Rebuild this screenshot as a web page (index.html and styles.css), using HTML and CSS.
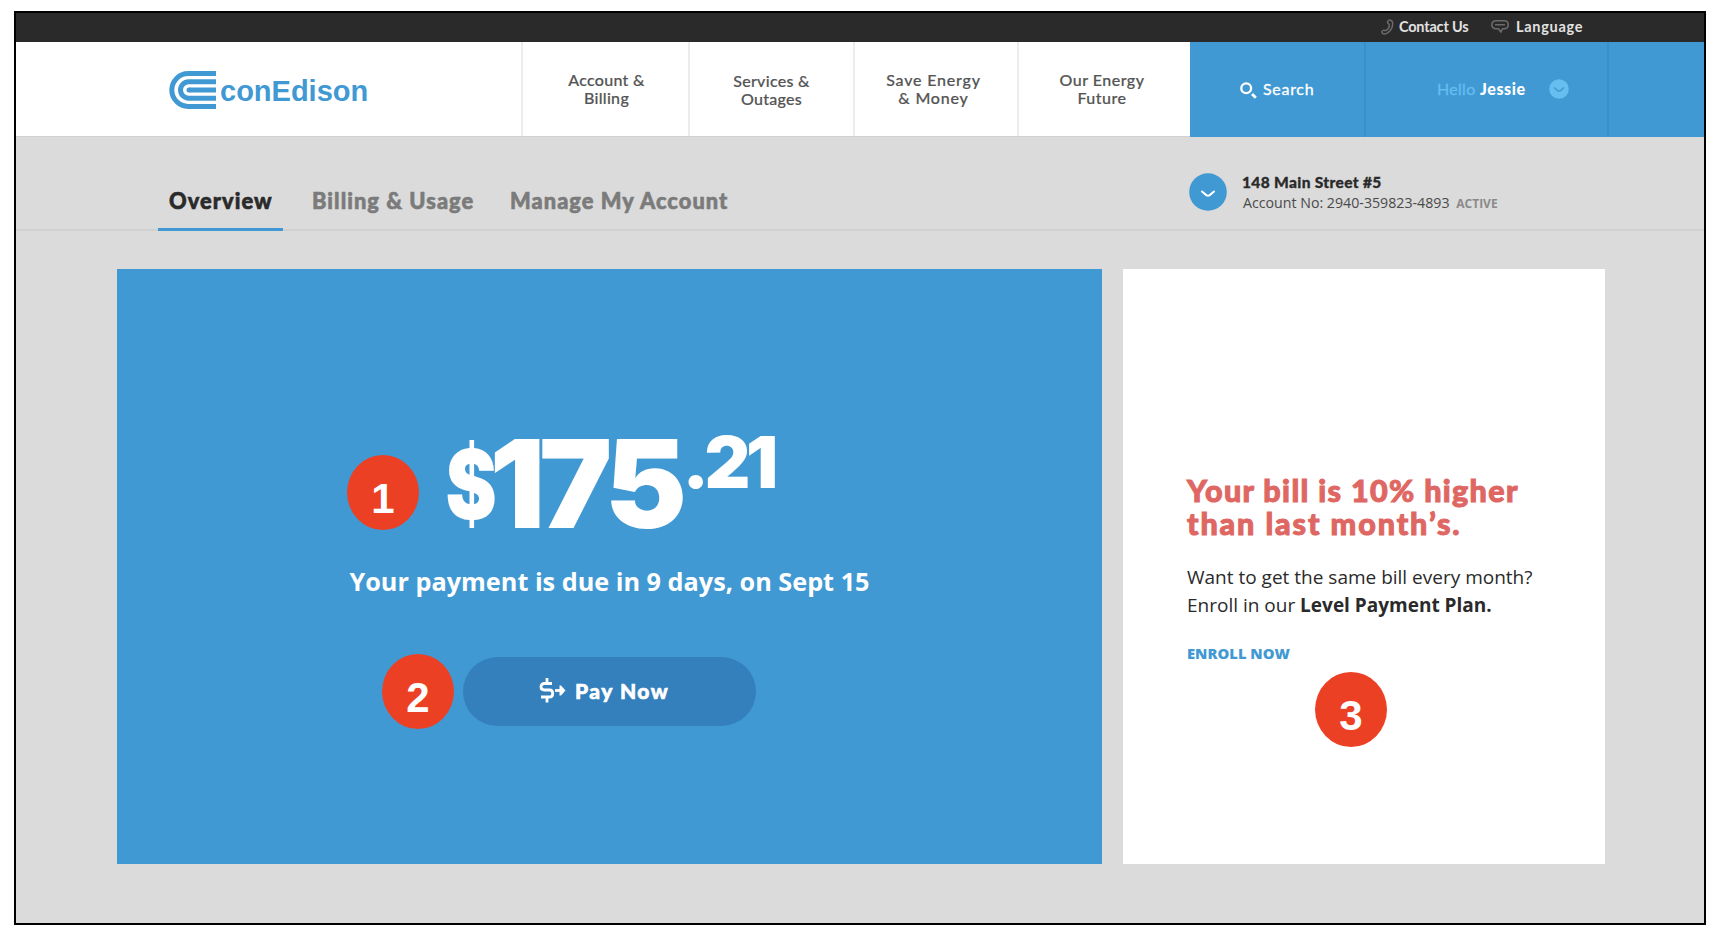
FILE: index.html
```
<!DOCTYPE html>
<html lang="en">
<head>
    <meta charset="UTF-8">
    <meta name="viewport" content="width=device-width, initial-scale=1.0">
    <title>conEdison - Account Overview</title>
    <link rel="stylesheet" href="styles.css">
</head>
<body>
<div class="frame">
    <div class="topbar">
        <a class="contact">
            <svg width="13" height="16" viewBox="0 0 13 16" fill="none" stroke="#6b6b6b" stroke-width="1.5">
                <path d="M7.2 1.8C8.6.6 10.8.9 11.4 3c.9 3.400-.9 8.200-4.400 10.700-2 1.400-4.500 1.500-5.700.4-.8-.9-.4-2.300.8-2.700 1.100-.4 1.900.6 3.100-.1 2.200-1.300 3.300-3.500 3.100-5.500C8.100 4.600 6.600 4.700 6.500 3.500c0-.7.2-1.300.7-1.700z"/>
            </svg>
            <span>Contact Us</span>
        </a>
        <a class="language">
            <svg width="18" height="13" viewBox="0 0 18 13" fill="none" stroke="#6b6b6b" stroke-width="1.600">
                <path d="M7.500 8.800H5C2.500 8.800.8 7.100.8 4.800S2.500.8 5 .8h8c2.500 0 4.200 1.700 4.200 4s-1.700 4-4.200 4h-1.500L9.800 12 7.500 8.800zM4 4.800h10"/>
            </svg>
            <span>Language</span>
        </a>
    </div>

    <div class="header">
        <div class="logo">
            <svg width="47" height="38" viewBox="0 0 47 38" fill="none" stroke="#4199d3" stroke-width="5">
                <path d="M47 2.600H19.200a16.400 16.400 0 0 0 0 32.800H47"/>
                <path d="M47 10.800H19.700a8.200 8.200 0 0 0 0 16.400H47"/>
                <path d="M47 19H20" />
                <circle cx="20" cy="19" r="2.500" fill="#4199d3" stroke="none"/>
            </svg>
            <span>conEdison</span>
        </div>
        <div class="nav nav-account">Account &amp;<br>Billing</div>
        <div class="nav nav-services">Services &amp;<br>Outages</div>
        <div class="nav nav-save">Save Energy<br>&amp; Money</div>
        <div class="nav nav-future">Our Energy<br>Future</div>
        <div class="search">
            <svg width="17" height="17" viewBox="0 0 17 17" fill="none" stroke="#fff">
                <circle cx="6.200" cy="6.200" r="4.900" stroke-width="2.300"/>
                <path d="M12 12l3.800 3.800" stroke-width="2.800"/>
            </svg>
            <span>Search</span>
        </div>
        <div class="user">
            <span class="hello">Hello</span>
            <span class="name">Jessie</span>
            <svg width="20" height="20" viewBox="0 0 20 20">
                <circle cx="10" cy="10" r="9.800" fill="#65bdf0"/>
                <path d="M5 8.500l3.300 2.800q1.700 1.300 3.400 0L15 8.500" fill="none" stroke="#4199d3" stroke-width="1.600"/>
            </svg>
        </div>
        <div class="header-end"></div>
    </div>

    <div class="subnav">
        <div class="tabs">
            <a class="tab active">Overview</a>
            <a class="tab usage">Billing &amp; Usage</a>
            <a class="tab manage">Manage My Account</a>
        </div>
        <div class="account">
            <svg width="38" height="38" viewBox="0 0 38 38">
                <circle cx="19" cy="19" r="18.800" fill="#4199d3"/>
                <path d="M13 18.500l4.300 3.600q1.700 1.200 3.400 0l4.300-3.600" fill="none" stroke="#fff" stroke-width="2" stroke-linecap="round"/>
            </svg>
            <div class="account-text">
                <div class="address">148 Main Street #5</div>
                <div class="number">Account No: 2940-359823-4893 <b>ACTIVE</b></div>
            </div>
        </div>
    </div>

    <div class="cards">
        <div class="card pay">
            <div class="amount">
                <span class="dollar">$</span>
                <span class="whole">175</span>
                <span class="cents">.21</span>
            </div>
            <div class="due">Your payment is due in 9 days, on Sept 15</div>
            <a class="pay-button">
                <svg width="27" height="25" viewBox="0 0 27 25" fill="none" stroke="#fff" stroke-width="2.800">
                    <path d="M13 5.500H5.200C3.200 5.500 2 6.800 2 8.800S3.200 12 5.200 12h5.300c2 0 3.200 1.400 3.200 3.400s-1.200 3.600-3.200 3.600H2M8 0v5.500M8 19v5.500"/>
                    <path d="M16 12.500h5"/>
                    <path d="M20.500 7.500l1.500 0 4.500 5-4.500 5h-1.500z" fill="#fff" stroke="none"/>
                </svg>
                <span>Pay Now</span>
            </a>
        </div>
        <div class="card bill">
            <h2><span class="line1">Your bill is 10% higher</span><br><span class="line2">than last month’s.</span></h2>
            <p>Want to get the same bill every month?<br>Enroll in our <b>Level Payment Plan.</b></p>
            <a class="enroll">ENROLL NOW</a>
        </div>
    </div>

    <!-- numbered callouts -->
    <div class="badge badge-1">1</div>
    <div class="badge badge-2">2</div>
    <div class="badge badge-3">3</div>
</div>
</body>
</html>
```
FILE: styles.css
```
* {
    box-sizing: border-box;
}
body {
    margin: 0;
    padding: 11px 0 0 14px;
    background: #fff;
    font-family: Lato, sans-serif;
    color: #2a2a2a;
    overflow: hidden;
}
svg {
    display: block;
    flex: none;
}
.frame {
    position: relative;
    width: 1692px;
    height: 914px;
    border: 2px solid #000;
    background: #dbdbdb;
}
.topbar {
    display: flex;
    justify-content: flex-end;
    height: 29px;
    padding-right: 121px;
    background: #2a2a2a;
    color: #e2e2e2;
    font-size: 14.5px;
    font-weight: bold;
    line-height: 28px;
}
.topbar a {
    display: flex;
}
.contact svg {
    margin: 6px 5px 0 0;
}
.contact span {
    width: 92px;
    letter-spacing: -0.2px;
}
.language svg {
    margin: 7px 7px 0 0;
}
.language span {
    width: 67px;
    letter-spacing: 0.7px;
    line-height: 27px;
}

.header {
    display: flex;
    height: 95px;
    border-bottom: 1px solid #d0d0d0;
    background: #fff;
}
.logo {
    display: flex;
    width: 505px;
    padding: 29px 0 0 153px;
    color: #4199d3;
    font: bold 29px/38px "Liberation Sans", Arial, sans-serif;
}
.logo span {
    margin-left: 4px;
    padding-top: 1px;
}
.nav {
    border-left: 2px solid #ececec;
    padding-top: 29px;
    text-align: center;
    font-size: 16px;
    font-weight: 500;
    line-height: 18.4px;
    letter-spacing: 0.3px;
    color: #555;
    -webkit-text-stroke: 0.2px;
}
.nav-account {
    width: 167px;
    padding-left: 2px;
}
.nav-services {
    width: 165px;
    padding-top: 30px;
}
.nav-save {
    width: 164px;
    padding-right: 5px;
    letter-spacing: 0.8px;
}
.nav-future {
    width: 173px;
    padding-right: 5px;
    letter-spacing: 0.5px;
}
.search, .user, .header-end {
    height: 95px;
    background: #4199d3;
    color: #fff;
    font-size: 16px;
    line-height: 94px;
}
.search {
    display: flex;
    width: 174px;
    padding-left: 50px;
    letter-spacing: 0.7px;
    -webkit-text-stroke: 0.3px;
}
.search svg {
    margin: 40px 6px 0 0;
}
.user {
    display: flex;
    width: 243px;
    padding-left: 71px;
    border-left: 2px solid #3b8ec9;
}
.hello {
    width: 43px;
    color: #65bdf0;
    letter-spacing: 0.3px;
    -webkit-text-stroke: 0.3px;
}
.name {
    width: 69px;
    font-weight: 900;
    letter-spacing: 0.6px;
}
.user svg {
    margin-top: 37px;
}
.header-end {
    flex: 1;
    border-left: 2px solid #3b8ec9;
}

.subnav {
    display: flex;
    height: 94px;
    border-bottom: 2px solid #d0d0d0;
}
.tabs {
    display: flex;
    width: 1173px;
    padding-left: 142px;
}
.tab {
    height: 94px;
    padding: 49px 0 0 11px;
    font-size: 21.8px;
    font-weight: 900;
    line-height: 30px;
    letter-spacing: 1.05px;
    color: #7b7b7b;
    white-space: nowrap;
    -webkit-text-stroke: 0.6px;
}
.tab.active {
    width: 125px;
    border-bottom: 3px solid #4199d3;
    color: #2a2a2a;
}
.tab.usage {
    width: 216px;
    padding-left: 29px;
}
.account {
    display: flex;
    padding-top: 36px;
}
.account-text {
    padding-left: 15px;
}
.address {
    margin-top: -1px;
    font-size: 15.5px;
    font-weight: 900;
    line-height: 20px;
    letter-spacing: 0.35px;
    -webkit-text-stroke: 0.3px;
}
.number {
    padding-left: 1px;
    font-family: "Open Sans", sans-serif;
    font-size: 14.2px;
    line-height: 21px;
    color: #4a4a4a;
}
.number b {
    margin-left: 3px;
    font-size: 12px;
    color: #8a8a8a;
}

.cards {
    display: flex;
    gap: 21px;
    padding: 38px 0 0 101px;
}
.card {
    height: 595px;
}
.pay {
    display: flex;
    flex-direction: column;
    align-items: center;
    width: 985px;
    padding-top: 149px;
    background: #4199d3;
    color: #fff;
}
.amount {
    display: flex;
    height: 124px;
    width: 328px;
    font-family: Inter, sans-serif;
    font-weight: 900;
    line-height: 1;
}
.dollar {
    width: 44px;
    padding-top: 15px;
    font-size: 77px;
    letter-spacing: -5px;
    transform: scaleY(1.25);
    transform-origin: top;
}
.whole {
    width: 196px;
    padding-top: 4px;
    font-size: 123px;
    letter-spacing: -6px;
}
.cents {
    padding-top: 9px;
    font-size: 71px;
    letter-spacing: -4.5px;
}
.due {
    margin-top: 24px;
    font: 700 25.25px/30px "Open Sans", sans-serif;
    white-space: nowrap;
}
.pay-button {
    display: flex;
    width: 293px;
    height: 69px;
    margin-top: 61px;
    padding: 21px 0 0 76px;
    border-radius: 35px;
    background: #3480bc;
    font-size: 21px;
    font-weight: 900;
    line-height: 26px;
    letter-spacing: 1.5px;
    -webkit-text-stroke: 0.6px;
}
.pay-button span {
    margin-left: 9px;
}
.bill {
    width: 482px;
    padding: 205px 0 0 64px;
    background: #fff;
}
.bill h2 {
    margin: 0;
    font-size: 30.5px;
    font-weight: 900;
    line-height: 33px;
    color: #df6763;
    -webkit-text-stroke: 1px;
}
.line1 {
    letter-spacing: 1.35px;
}
.line2 {
    letter-spacing: 1.9px;
}
.bill p {
    margin: 24px 0 24px;
    font: 19px/27.6px "Open Sans", sans-serif;
}
.enroll {
    font: 800 14.8px/20px "Open Sans", sans-serif;
    color: #4199d3;
}

.badge {
    position: absolute;
    width: 72px;
    height: 75px;
    padding-top: 6px;
    border-radius: 50%;
    background: #ec4024;
    color: #fff;
    text-align: center;
    font: bold 42px/75px "Liberation Sans", Arial, sans-serif;
}
.badge-1 {
    left: 331px;
    top: 442px;
}
.badge-2 {
    left: 366px;
    top: 641px;
}
.badge-3 {
    left: 1299px;
    top: 659px;
}
```
